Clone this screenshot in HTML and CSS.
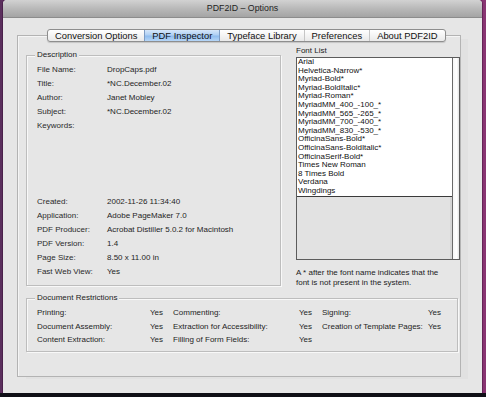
FILE: index.html
```html
<!DOCTYPE html>
<html lang="en">
<head>
    <meta charset="UTF-8">
    <title>PDF2ID – Options</title>
    <link rel="stylesheet" href="styles.css">
</head>
<body>
    <div class="desktop">
        <div class="window">
            <div class="titlebar">PDF2ID – Options</div>

            <div class="window-body">
                <!-- Tabs -->
                <div class="tabs">
                    <span class="tab">Conversion Options</span>
                    <span class="tab active">PDF Inspector</span>
                    <span class="tab">Typeface Library</span>
                    <span class="tab">Preferences</span>
                    <span class="tab">About PDF2ID</span>
                </div>

                <div class="tabview">
                    <div class="top">
                        <!-- Description -->
                        <div class="group desc">
                            <span class="legend">Description</span>
                            <div class="rows">
                                <div class="row"><span class="key">File Name:</span><span>DropCaps.pdf</span></div>
                                <div class="row"><span class="key">Title:</span><span>*NC.December.02</span></div>
                                <div class="row"><span class="key">Author:</span><span>Janet Mobley</span></div>
                                <div class="row"><span class="key">Subject:</span><span>*NC.December.02</span></div>
                                <div class="row keywords"><span class="key">Keywords:</span><span></span></div>
                                <div class="row"><span class="key">Created:</span><span>2002-11-26 11:34:40</span></div>
                                <div class="row"><span class="key">Application:</span><span>Adobe PageMaker 7.0</span></div>
                                <div class="row"><span class="key">PDF Producer:</span><span>Acrobat Distiller 5.0.2 for Macintosh</span></div>
                                <div class="row"><span class="key">PDF Version:</span><span>1.4</span></div>
                                <div class="row"><span class="key">Page Size:</span><span>8.50 x 11.00 in</span></div>
                                <div class="row"><span class="key">Fast Web View:</span><span>Yes</span></div>
                            </div>
                        </div>

                        <!-- Font list -->
                        <div class="fonts">
                            <div class="fonts-label">Font List</div>
                            <div class="listbox">
                                <div class="list-main">
                                    <ul>
                                        <li>Arial</li>
                                        <li>Helvetica-Narrow*</li>
                                        <li>Myriad-Bold*</li>
                                        <li>Myriad-BoldItalic*</li>
                                        <li>Myriad-Roman*</li>
                                        <li>MyriadMM_400_-100_*</li>
                                        <li>MyriadMM_565_-265_*</li>
                                        <li>MyriadMM_700_-400_*</li>
                                        <li>MyriadMM_830_-530_*</li>
                                        <li>OfficinaSans-Bold*</li>
                                        <li>OfficinaSans-BoldItalic*</li>
                                        <li>OfficinaSerif-Bold*</li>
                                        <li>Times New Roman</li>
                                        <li>8 Times Bold</li>
                                        <li>Verdana</li>
                                        <li>Wingdings</li>
                                    </ul>
                                </div>
                                <div class="scrolltrack"></div>
                            </div>
                            <p class="note">A * after the font name indicates that the<br>font is not present in the system.</p>
                        </div>
                    </div>

                    <!-- Restrictions -->
                    <div class="group restrictions">
                        <span class="legend">Document Restrictions</span>
                        <div class="grid">
                            <span>Printing:</span><span>Yes</span>
                            <span>Commenting:</span><span>Yes</span>
                            <span>Signing:</span><span>Yes</span>

                            <span>Document Assembly:</span><span>Yes</span>
                            <span>Extraction for Accessibility:</span><span>Yes</span>
                            <span>Creation of Template Pages:</span><span>Yes</span>

                            <span>Content Extraction:</span><span>Yes</span>
                            <span>Filling of Form Fields:</span><span>Yes</span>
                            <span></span><span></span>
                        </div>
                    </div>
                </div>
            </div>
        </div>
        <div class="dock-edge"></div>
    </div>
</body>
</html>
```

FILE: styles.css
```css
* {
    margin: 0;
    padding: 0;
    box-sizing: border-box;
    font-family: 'Liberation Sans', Arial, sans-serif;
}

body {
    width: 486px;
    height: 397px;
    overflow: hidden;
    background: #111018;
    color: #1e1e1e;
}

.desktop {
    height: 393px;
    padding: 0 4px 0 3px;
    background: linear-gradient(to right, #5a2f5c 0%, #6e2f6c 3%, #7b2e6a 97%, #8a3573 100%);
}

.window {
    height: 393px;
    background: #e6e6e6;
    border-radius: 4px 4px 0 0;
    box-shadow: 0 0 0 1px rgba(40, 10, 40, 0.35);
}

.dock-edge {
    height: 4px;
    background: #0f0f16;
}

.titlebar {
    height: 18px;
    line-height: 17px;
    text-align: center;
    font-size: 8.8px;
    color: #222;
    background: linear-gradient(#d2d2d2, #b9b9b9 50%, #a4a4a4);
    border-bottom: 1px solid #8c8c8c;
    border-radius: 4px 4px 0 0;
}

.window-body {
    padding: 11px 0 0 14px;
}

/* tab bar */
.tabs {
    position: relative;
    z-index: 1;
    display: flex;
    width: fit-content;
    height: 13px;
    margin-left: 30px;
    border: 1px solid #8e8e8e;
    border-radius: 3px;
    background: linear-gradient(#ffffff, #f4f4f4 50%, #e9e9e9);
    box-shadow: 0 1px 1px rgba(0, 0, 0, 0.15);
}

.tab {
    padding: 0 7px;
    font-size: 9.4px;
    line-height: 11px;
    color: #111;
    border-left: 1px solid #c6c6c6;
}

.tab:first-child {
    border-left: none;
}

.tab.active {
    background: linear-gradient(#d6e7fa, #b0d0f4 45%, #8fbcee 55%, #b6d6f7);
    border-left-color: #7d9cc4;
}

.tab.active + .tab {
    border-left-color: #7d9cc4;
}

.tabview {
    width: 444px;
    height: 342px;
    margin-top: -7px;
    padding: 10px 0 0 8px;
    border: 1px solid #b3b3b3;
    box-shadow: inset 1px 1px 0 #f5f5f5, 8px 3px 0 -1px #e1e1e1;
}

.top {
    display: flex;
    gap: 15px;
}

/* group boxes */
.group {
    border: 1px solid #bdbdbd;
    box-shadow: inset 1px 1px 0 #f8f8f8, 1px 1px 0 #f8f8f8;
    font-size: 8px;
}

.legend {
    display: table;
    height: 10px;
    line-height: 10px;
    margin: -6px 0 0 8px;
    padding: 0 2px;
    background: #e6e6e6;
    color: #222;
}

.desc {
    width: 255px;
    height: 231px;
    margin-top: 9px;
}

.rows {
    margin-top: 3px;
    padding-left: 10px;
}

.row {
    display: flex;
    height: 14px;
    line-height: 14px;
}

.row.keywords {
    height: 76px;
}

.key {
    width: 70px;
    color: #2a2a2a;
}

/* font list */
.fonts {
    width: 164px;
    font-size: 8px;
}

.fonts-label {
    line-height: 10px;
    margin-bottom: 1px;
    color: #222;
}

.listbox {
    display: flex;
    height: 203px;
    border: 1px solid #5c5c5c;
    background: #e2e2e2;
}

.list-main {
    flex: 1;
    border-right: 1px solid #6a6a6a;
    box-shadow: inset -2px 0 0 #d4d4d4;
}

.list-main ul {
    list-style: none;
    background: #fff;
    border-bottom: 1px solid #3a3a3a;
    padding-left: 1px;
}

.list-main li {
    height: 8.6px;
    line-height: 8.6px;
    font-size: 8px;
    color: #111;
    white-space: nowrap;
}

.scrolltrack {
    width: 6px;
    background: linear-gradient(to right, #f6f6f6, #ffffff 60%, #e4e4e4);
}

.note {
    margin-top: 8px;
    line-height: 10px;
    color: #222;
    white-space: nowrap;
}

/* restrictions */
.restrictions {
    width: 432px;
    height: 54px;
    margin-top: 10px;
}

.restrictions .grid {
    display: grid;
    grid-template-columns: 113px 23px 126px 23px 106px auto;
    grid-auto-rows: 13.5px;
    line-height: 13.5px;
    margin-top: 3px;
    padding-left: 10px;
}
```
